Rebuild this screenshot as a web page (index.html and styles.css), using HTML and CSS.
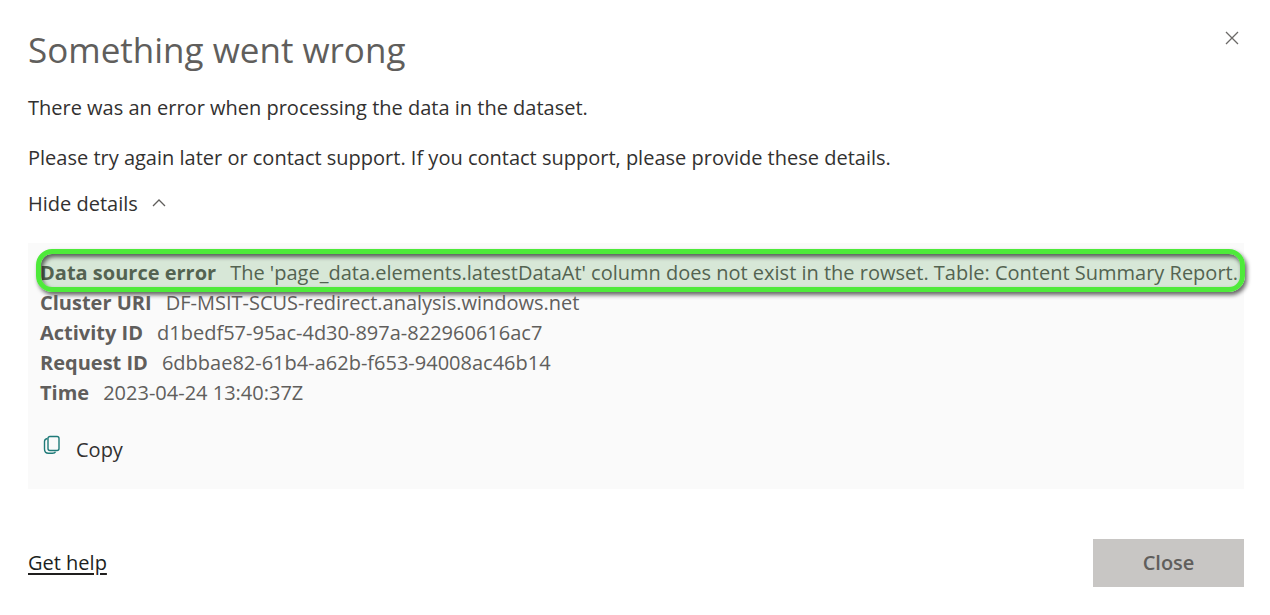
FILE: index.html
```html
<!DOCTYPE html>
<html lang="en">
<head>
<meta charset="utf-8">
<title>Something went wrong</title>
<link rel="stylesheet" href="styles.css">
</head>
<body>
<main class="dialog">
  <header class="dialog-header">
    <h1 class="title">Something went wrong</h1>
    <button class="dismiss" type="button" aria-label="Dismiss">
      <svg width="14" height="14" viewBox="0 0 14 14" fill="none" stroke="#6b6967" stroke-width="1.3"><path d="M1 1l12 12M13 1L1 13"/></svg>
    </button>
  </header>
  <p class="message">There was an error when processing the data in the dataset.</p>
  <p class="message">Please try again later or contact support. If you contact support, please provide these details.</p>
  <button class="toggle" type="button" aria-expanded="true">Hide details
    <svg width="14" height="12" viewBox="0 0 14 12" fill="none" stroke="#605e5c" stroke-width="1.3"><path d="M1 8l6-6 6 6"/></svg>
  </button>
  <section class="details">
    <dl class="facts">
      <div class="fact highlighted"><dt>Data source error</dt><dd>The 'page_data.elements.latestDataAt' column does not exist in the rowset. Table: Content Summary Report.</dd></div>
      <div class="fact"><dt>Cluster URI</dt><dd>DF-MSIT-SCUS-redirect.analysis.windows.net</dd></div>
      <div class="fact"><dt>Activity ID</dt><dd>d1bedf57-95ac-4d30-897a-822960616ac7</dd></div>
      <div class="fact"><dt>Request ID</dt><dd>6dbbae82-61b4-a62b-f653-94008ac46b14</dd></div>
      <div class="fact"><dt>Time</dt><dd>2023-04-24 13:40:37Z</dd></div>
    </dl>
    <button class="copy" type="button">
      <svg width="18" height="20" viewBox="0 0 18 20" fill="none" stroke="#1f7a78" stroke-width="1.4"><rect x="5" y="1.500" width="11" height="14" rx="2"/><path d="M4.500 3.500Q1.500 4 1.500 6.500V14q0 4.300 4 4.300h4q2.500 0 3-1.500"/></svg>
      <span>Copy</span>
    </button>
  </section>
  <footer class="dialog-footer">
    <a class="help" href="#">Get help</a>
    <button class="close" type="button">Close</button>
  </footer>
</main>
</body>
</html>
```
FILE: styles.css
```css
* { box-sizing: border-box; }
body {
  margin: 0;
  background: #fff;
  color: #323130;
  font: 20px/30px "Open Sans", "Noto Sans", sans-serif;
}
button {
  padding: 0;
  border: 0;
  background: none;
  color: inherit;
  font: inherit;
  cursor: pointer;
}
svg { display: block; flex: none; }
.dialog { padding: 26px 26px 28px 28px; }
.dialog-header {
  display: flex;
  justify-content: space-between;
  align-items: flex-start;
}
.title {
  margin: 0;
  color: #605e5c;
  font-size: 35px;
  font-weight: 400;
  line-height: 48px;
}
.dismiss { padding: 5px; }
.message { margin: 19px 0 20px; }
.message + .message { margin: 0 0 16px; }
.toggle {
  display: flex;
  align-items: center;
  gap: 14px;
}
.details {
  margin-top: 24px;
  padding: 15px 12px 24px;
  background: #fafafa;
}
.facts { margin: 0; color: #605e5c; }
.fact { display: flex; gap: 14px; position: relative; white-space: nowrap; }
.fact dt { font-weight: 700; }
.fact dd { margin: 0; }
.highlighted::after {
  content: "";
  position: absolute;
  inset: -9px -13px -4px -4px;
  border: 5px solid #4eea3a;
  border-radius: 16px;
  background: rgba(20, 130, 20, 0.15);
  box-shadow: 2px 3px 4px rgba(0, 0, 0, 0.6), inset 2px 3px 4px rgba(0, 0, 0, 0.6);
}
.copy {
  display: flex;
  align-items: flex-start;
  gap: 15px;
  margin-top: 27px;
  padding-left: 3px;
}
.dialog-footer {
  display: flex;
  justify-content: space-between;
  align-items: center;
  margin-top: 50px;
}
.help { color: #201f1e; text-underline-offset: 3px; }
.close {
  min-width: 151px;
  padding: 9px 48px;
  background: #c8c6c4;
  color: #605e5c;
  font-weight: 600;
}
```
